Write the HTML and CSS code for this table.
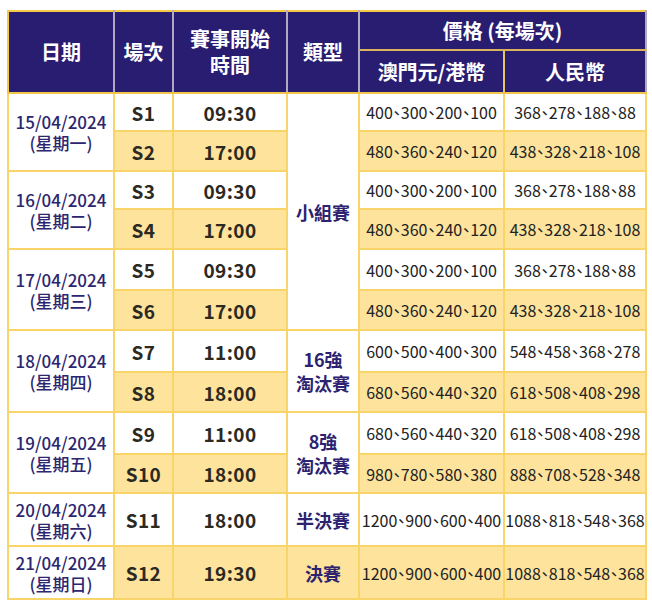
FILE: index.html
```html
<!DOCTYPE html>
<html lang="zh-Hant">
<head>
<meta charset="utf-8">
<link rel="stylesheet" href="styles.css">
</head>
<body>
<div class="wrap">
<table class="sched">
  <colgroup>
    <col class="c-date"><col class="c-no"><col class="c-time"><col class="c-type"><col class="c-mop"><col class="c-rmb">
  </colgroup>
  <thead>
    <tr class="h1">
      <th rowspan="2">日期</th>
      <th rowspan="2">場次</th>
      <th rowspan="2" class="two">賽事開始<br>時間</th>
      <th rowspan="2">類型</th>
      <th colspan="2" class="price-h">價格 (每場次)</th>
    </tr>
    <tr class="h2">
      <th>澳門元/港幣</th>
      <th>人民幣</th>
    </tr>
  </thead>
  <tbody>
    <tr class="r38">
      <td rowspan="2" class="date">15/04/2024<br>(星期一)</td>
      <td class="no">S1</td><td class="time">09:30</td>
      <td rowspan="6" class="type">小組賽</td>
      <td class="price">400、300、200、100</td><td class="price">368、278、188、88</td>
    </tr>
    <tr class="r40 hl">
      <td class="no">S2</td><td class="time">17:00</td>
      <td class="price">480、360、240、120</td><td class="price">438、328、218、108</td>
    </tr>
    <tr class="r38">
      <td rowspan="2" class="date">16/04/2024<br>(星期二)</td>
      <td class="no">S3</td><td class="time">09:30</td>
      <td class="price">400、300、200、100</td><td class="price">368、278、188、88</td>
    </tr>
    <tr class="r40 hl">
      <td class="no">S4</td><td class="time">17:00</td>
      <td class="price">480、360、240、120</td><td class="price">438、328、218、108</td>
    </tr>
    <tr class="r41">
      <td rowspan="2" class="date">17/04/2024<br>(星期三)</td>
      <td class="no">S5</td><td class="time">09:30</td>
      <td class="price">400、300、200、100</td><td class="price">368、278、188、88</td>
    </tr>
    <tr class="r40 hl">
      <td class="no">S6</td><td class="time">17:00</td>
      <td class="price">480、360、240、120</td><td class="price">438、328、218、108</td>
    </tr>
    <tr class="r42">
      <td rowspan="2" class="date">18/04/2024<br>(星期四)</td>
      <td class="no">S7</td><td class="time">11:00</td>
      <td rowspan="2" class="type">16強<br>淘汰賽</td>
      <td class="price">600、500、400、300</td><td class="price">548、458、368、278</td>
    </tr>
    <tr class="r40 hl">
      <td class="no">S8</td><td class="time">18:00</td>
      <td class="price">680、560、440、320</td><td class="price">618、508、408、298</td>
    </tr>
    <tr class="r42">
      <td rowspan="2" class="date">19/04/2024<br>(星期五)</td>
      <td class="no">S9</td><td class="time">11:00</td>
      <td rowspan="2" class="type">8強<br>淘汰賽</td>
      <td class="price">680、560、440、320</td><td class="price">618、508、408、298</td>
    </tr>
    <tr class="r39 hl">
      <td class="no">S10</td><td class="time">18:00</td>
      <td class="price">980、780、580、380</td><td class="price">888、708、528、348</td>
    </tr>
    <tr class="r53">
      <td class="date">20/04/2024<br>(星期六)</td>
      <td class="no">S11</td><td class="time">18:00</td>
      <td class="type">半決賽</td>
      <td class="price">1200、900、600、400</td><td class="price">1088、818、548、368</td>
    </tr>
    <tr class="r53 hl">
      <td class="date white">21/04/2024<br>(星期日)</td>
      <td class="no">S12</td><td class="time">19:30</td>
      <td class="type">決賽</td>
      <td class="price">1200、900、600、400</td><td class="price">1088、818、548、368</td>
    </tr>
  </tbody>
</table>
</div>
</body>
</html>
```

FILE: styles.css
```css
html, body {
  margin: 0;
  padding: 0;
  background: #ffffff;
}
.wrap {
  padding: 10px 0 0 7px;
}
.sched {
  border-collapse: collapse;
  table-layout: fixed;
  width: 638px;
  font-family: "Noto Sans CJK TC", "Noto Sans", sans-serif;
  border: 2px solid #f6c945;
}
.c-date { width: 106px; }
.c-no { width: 59px; }
.c-time { width: 114px; }
.c-type { width: 72px; }
.c-mop { width: 145px; }
.c-rmb { width: 142px; }

.sched th {
  background: #291d72;
  color: #ffffff;
  font-weight: 700;
  font-size: 20px;
  line-height: 26px;
  padding: 0;
  text-align: center;
  vertical-align: middle;
  border-left: 2px solid #b3a8c4;
  border-right: 2px solid #b3a8c4;
  border-bottom: 2px solid #f2c54a;
}
.sched thead tr:first-child th:first-child { border-left-color: #f6c945; }
.sched .h1 { height: 39px; }
.sched .h2 { height: 43px; }
.sched .price-h { border-bottom: 2px solid #d9b45a; }
.sched .h2 th:first-child { border-right: 2px solid #e8c45a; }

.sched td {
  border: 2px solid #f9d469;
  padding: 0;
  text-align: center;
  vertical-align: middle;
  background: #ffffff;
}
.sched tr.hl td { background: #fde39c; }
.sched tr.hl td.white { background: #ffffff; }

.r38 { height: 38px; }
.r39 { height: 39px; }
.r40 { height: 40px; }
.r41 { height: 41px; }
.r42 { height: 42px; }
.r53 { height: 53px; }

.date {
  color: #2c2670;
  font-size: 17px;
  line-height: 21px;
  font-weight: 500;
}
.no, .time {
  color: #2b2922;
  font-weight: 700;
  font-size: 19px;
  letter-spacing: 0.4px;
}
.type {
  color: #2c2270;
  font-weight: 700;
  font-size: 18px;
  line-height: 24px;
}
.price {
  color: #222222;
  font-size: 16px;
  font-feature-settings: "halt";
  white-space: nowrap;
}
```
